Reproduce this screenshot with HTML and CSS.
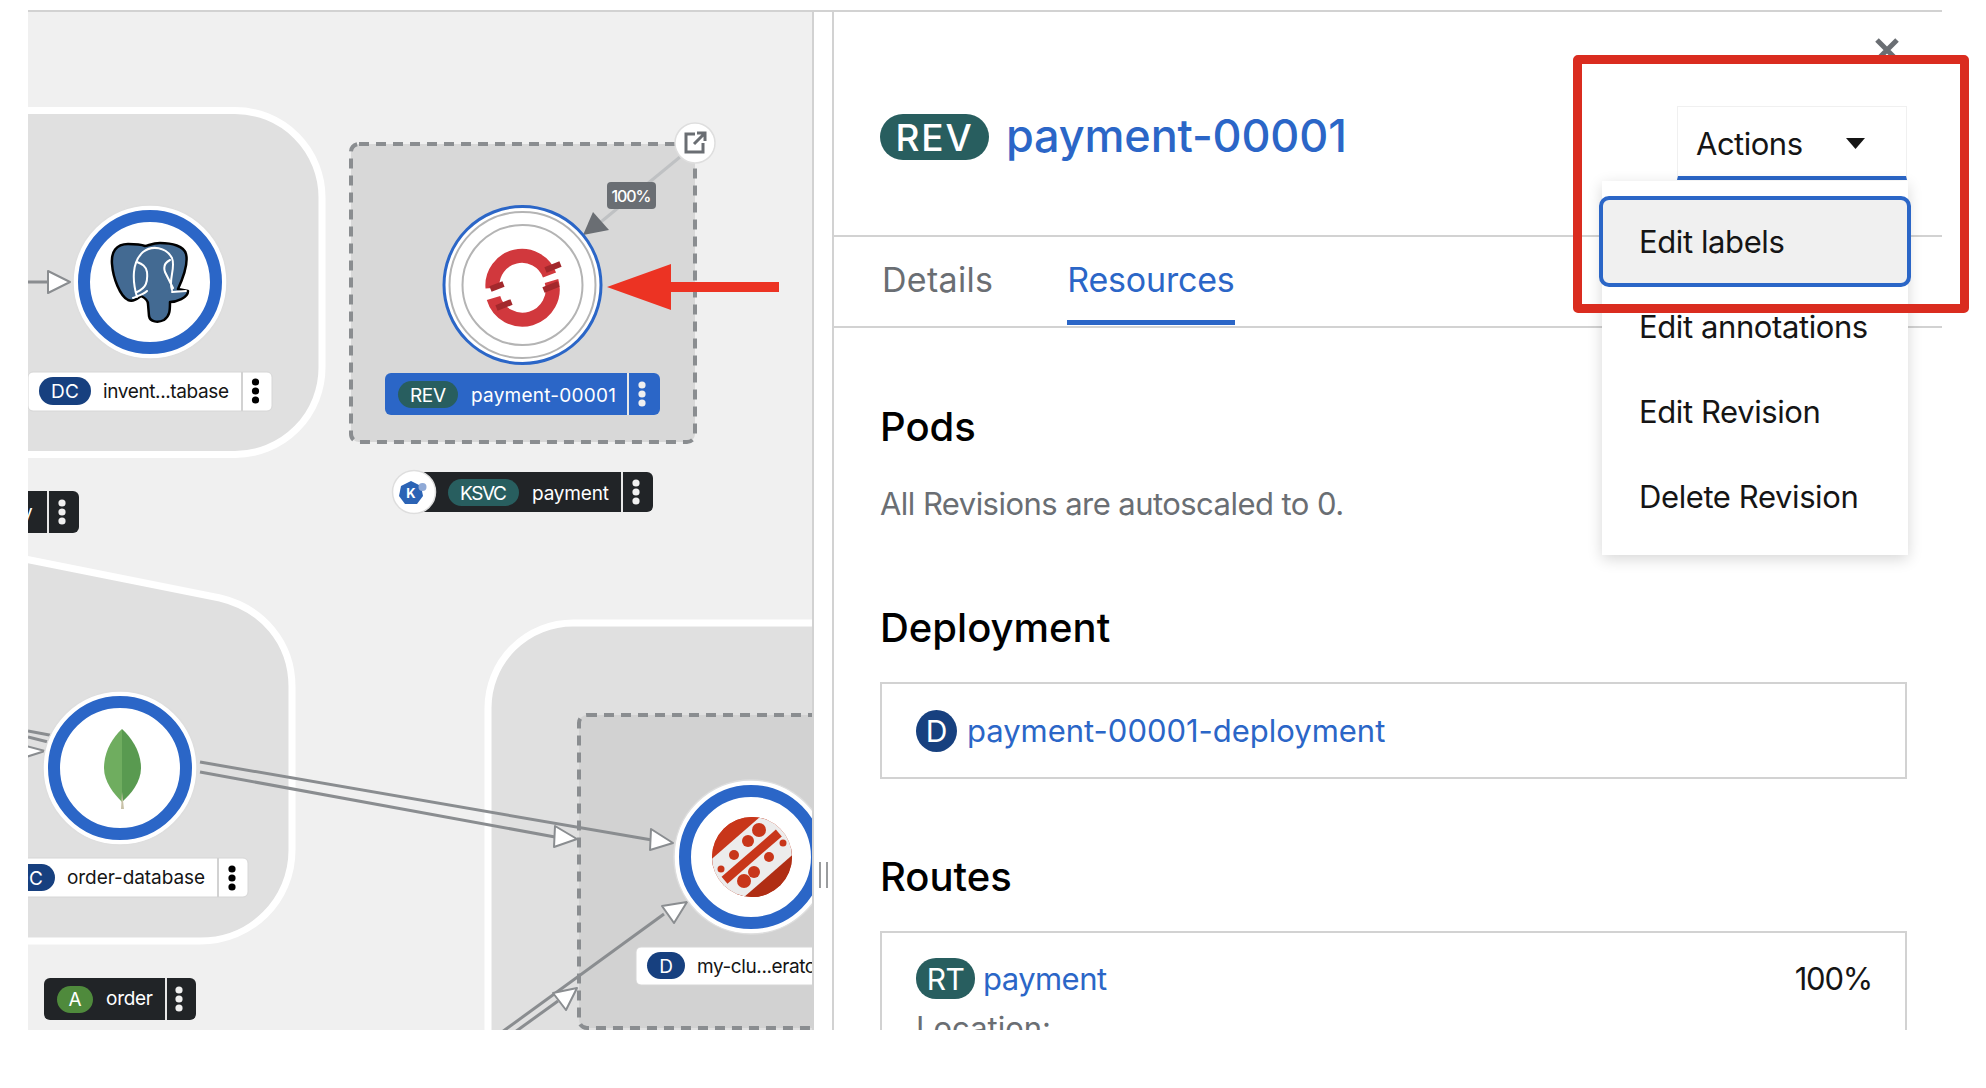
FILE: index.html
```html
<!DOCTYPE html>
<html lang="en">
<head>
<meta charset="utf-8">
<title>payment-00001</title>
<link rel="stylesheet" href="styles.css">
</head>
<body>
<div class="stage">
  <div class="canvas">
    <svg class="topology" viewBox="28 12 784 1018" width="784" height="1018" xmlns="http://www.w3.org/2000/svg">
      <defs>
        <g id="keb"><circle cx="0" cy="-9" r="3.6"/><circle cx="0" cy="0" r="3.6"/><circle cx="0" cy="9" r="3.6"/></g>
        <clipPath id="ballclip"><circle cx="752" cy="857" r="40"/></clipPath>
      </defs>

      <!-- groups -->
      <path class="group" d="M-40 110.500H235A87 87 0 0 1 322 197.500V367A87 87 0 0 1 235 454.500H-40Z"/>
      <path class="group" d="M-40 546L220 598C262 608 292 642 292 687V850C292 900 252 941 200 941H-40Z"/>
      <path class="group" d="M900 623H573A85 85 0 0 0 488 708V1100H900Z"/>

      <rect class="dashed d1" x="351" y="144" width="344" height="298" rx="8"/>
      <rect class="dashed d2" x="579" y="715" width="400" height="313" rx="8"/>

      <!-- edges -->
      <g class="edge">
        <path d="M28 282H48"/>
        <path d="M200 762L652 840"/>
        <path d="M200 772L555 837"/>
        <path d="M28 737L60 745"/>
        <path d="M502 1032L664 914"/>
        <path d="M515 1032L558 1001"/>
      </g>
      <g class="head">
        <path d="M48 271L70 282L48 293Z"/>
        <path d="M555 826L577 839L554 847Z"/>
        <path d="M651 829L673 843L650 850Z"/>
        <path d="M662 906L687 902L674 923Z"/>
        <path d="M553 993L577 988L566 1010Z"/>
        <path d="M22 745L45 751L26 757Z"/>
      </g>

      <!-- postgres node -->
      <circle class="node" cx="150" cy="282" r="77"/>
      <circle class="ring" cx="150" cy="282" r="66"/>
      <path class="pg-body" d="M128 244C116 244 111 252 112 264C113 278 120 296 128 300C133 302 137 299 141 296C145 298 148 300 148 304L149 316C150 322 158 323 164 320C170 316 170 310 170 302C176 302 188 298 188 291L178 289C184 276 188 262 186 254C184 246 172 243 160 243C152 243 148 246 145 246C140 244 134 244 128 244Z"/>
      <path class="pg-line" d="M137 297C132 280 132 262 143 252C152 245 166 247 172 258C176 268 168 280 172 290M137 262C142 264 146 266 147 272C148 282 146 288 137 292M170 260C166 262 163 266 165 272L173 288M133 298C138 296 144 294 147 291M172 292L186 291"/>

      <!-- openshift revision node -->
      <path class="thinline" d="M680 157L596 226"/>
      <path class="gray-head" d="M583 235L593 212L609 230Z"/>
      <circle class="node" cx="522.500" cy="285" r="78.500"/>
      <circle class="rev-ring" cx="522.500" cy="285" r="78.500"/>
      <circle class="rev-inner" cx="522.500" cy="285" r="73"/>
      <circle class="rev-inner" cx="522.500" cy="285" r="60"/>
      <g transform="translate(-1.500 0)">
        <path class="os-arc" d="M494 288A29.500 29.500 0 0 1 551 275"/>
        <path class="os-arc" d="M553 281A30 30 0 0 1 495 298"/>
        <path class="os-stripe" d="M547 270L562 264M545 290L560 284M492 289L505 284M498 308L513 302"/>
      </g>

      <rect class="tip" x="607" y="182" width="49" height="27" rx="4"/>
      <text class="tip-text" x="631.500" y="201.500" text-anchor="middle" textLength="40">100%</text>
      <circle class="node" cx="695" cy="143" r="20"/>
      <path class="ext" d="M695 134H686V152H703V143M694 144L704 134M697 133H705V141"/>

      <!-- red arrow -->
      <path class="red-arrow" d="M607 287L671 264V282H779V292H671V310Z"/>

      <!-- mongodb -->
      <path class="edge-mini" d="M28 731L60 737"/>
      <circle class="node" cx="120" cy="768" r="77"/>
      <circle class="ring" cx="120" cy="768" r="66"/>
      <path class="leaf-l" d="M122 729C112 738 104 752 104 768C104 782 114 794 122 802Z"/>
      <path class="leaf-r" d="M122 729C132 738 141 752 141 768C141 782 131 794 122 802Z"/>
      <path class="stem" d="M122 792L124 809L121 809Z"/>

      <!-- strimzi -->
      <circle class="node" cx="751" cy="857" r="77"/>
      <circle class="ring" cx="751" cy="857" r="66"/>
      <g clip-path="url(#ballclip)">
        <rect class="ball-a" x="700" y="805" width="110" height="54"/>
        <rect class="ball-b" x="700" y="857" width="110" height="54"/>
        <g transform="rotate(-41 752 857)">
          <rect class="ball-a" x="690" y="790" width="130" height="50"/>
          <rect class="ball-b" x="690" y="875" width="130" height="50"/>
          <rect class="ball-w" x="690" y="832" width="130" height="50"/>
          <rect class="ball-band" x="716" y="852" width="72" height="9"/>
        </g>
        <g class="ball-dot">
          <circle cx="759" cy="830" r="7"/><circle cx="748" cy="841" r="6"/><circle cx="734" cy="855" r="5"/><circle cx="721" cy="869" r="3.500"/>
          <circle cx="783" cy="843" r="3.500"/><circle cx="769" cy="857" r="5"/><circle cx="754" cy="872" r="6"/><circle cx="744" cy="881" r="7"/>
        </g>
      </g>

      <!-- labels -->
      <g>
        <rect class="lab-w" x="28" y="372" width="244" height="39" rx="5"/>
        <rect class="pill-dc" x="39" y="377" width="52" height="28" rx="14"/>
        <text class="pill-t" x="65" y="398" text-anchor="middle" textLength="28">DC</text>
        <text class="lab-t" x="103" y="398" textLength="126">invent...tabase</text>
        <path class="div-g" d="M242 372V411"/>
        <use href="#keb" x="255.500" y="391" class="keb-d"/>
      </g>
      <g>
        <rect class="lab-b" x="385" y="373" width="275" height="42" rx="6"/>
        <rect class="pill-rev" x="398" y="381" width="60" height="27" rx="13.500"/>
        <text class="pill-t" x="428" y="402" text-anchor="middle" textLength="36">REV</text>
        <text class="lab-tw" x="471" y="402" textLength="145">payment-00001</text>
        <path class="div-l" d="M628 373V415"/>
        <use href="#keb" x="642" y="394" class="keb-w"/>
      </g>
      <g>
        <rect class="lab-k" x="414" y="472" width="239" height="40" rx="6"/>
        <circle class="node" cx="414" cy="492" r="21.500"/>
        <path class="kn" d="M411 481L421 486L423 496L417 504H405L399 496L401 486Z"/>
        <circle class="kn2" cx="422.500" cy="487" r="4"/>
        <text class="kn-t" x="411" y="498" text-anchor="middle">K</text>
        <rect class="pill-rev" x="448" y="479" width="71" height="27" rx="13.500"/>
        <text class="pill-t" x="483.500" y="500" text-anchor="middle" textLength="47">KSVC</text>
        <text class="lab-tw" x="532" y="500" textLength="77">payment</text>
        <path class="div-l" d="M622 472V512"/>
        <use href="#keb" x="636" y="492" class="keb-w"/>
      </g>
      <g>
        <rect class="lab-k" x="0" y="491" width="79" height="42" rx="6"/>
        <text class="lab-tw" x="22" y="519">y</text>
        <path class="div-l" d="M48 491V533"/>
        <use href="#keb" x="62" y="512" class="keb-w"/>
      </g>
      <g>
        <rect class="lab-w" x="0" y="858" width="248" height="39" rx="5"/>
        <rect class="pill-dc" x="3" y="864" width="52" height="27" rx="13.500"/>
        <text class="pill-t" x="29" y="885" text-anchor="middle" textLength="28">DC</text>
        <text class="lab-t" x="67" y="884" textLength="138">order-database</text>
        <path class="div-g" d="M218 858V897"/>
        <use href="#keb" x="232" y="878" class="keb-d"/>
      </g>
      <g>
        <rect class="lab-k" x="44" y="978" width="152" height="42" rx="6"/>
        <rect class="pill-a" x="57" y="986" width="36" height="27" rx="13.500"/>
        <text class="pill-t" x="75" y="1006" text-anchor="middle">A</text>
        <text class="lab-tw" x="106" y="1005" textLength="47">order</text>
        <path class="div-l" d="M166 978V1020"/>
        <use href="#keb" x="179" y="999" class="keb-w"/>
      </g>
      <g>
        <rect class="lab-w" x="636" y="947" width="240" height="38" rx="5"/>
        <rect class="pill-dc" x="647" y="952" width="38" height="27" rx="13.500"/>
        <text class="pill-t" x="666" y="973" text-anchor="middle">D</text>
        <text class="lab-t" x="697" y="973" textLength="126">my-clu...erator</text>
      </g>
    </svg>
  </div>

  <div class="splitter"><span class="grip"></span></div>

  <section class="panel">
    <div class="panel-clip">
      <header class="panel-head">
        <span class="badge badge-rev">REV</span>
        <h1 class="title">payment-00001</h1>
        <button class="actions" type="button">
          <span>Actions</span>
          <svg class="caret" viewBox="0 0 19 11" width="19" height="11"><path d="M0 0H19L9.500 11Z"/></svg>
        </button>
      </header>
      <nav class="tabs">
        <span class="tab">Details</span>
        <span class="tab tab-on">Resources</span>
      </nav>
      <div class="content">
        <h2 class="h-pods">Pods</h2>
        <p class="muted">All Revisions are autoscaled to 0.</p>
        <h2 class="h-next">Deployment</h2>
        <div class="box box-dep">
          <span class="icon-d">D</span>
          <a class="link">payment-00001-deployment</a>
        </div>
        <h2 class="h-routes">Routes</h2>
        <div class="box box-route">
          <div class="route-row">
            <span class="icon-rt">RT</span>
            <a class="link link-rt">payment</a>
            <span class="pct">100%</span>
          </div>
          <div class="location">Location:</div>
        </div>
      </div>
    </div>

    <svg class="close" viewBox="0 0 26 26" width="26" height="26"><path d="M3 3L23 23M23 3L3 23"/></svg>

    <ul class="menu">
      <li class="item item-focus">Edit labels</li>
      <li class="item">Edit annotations</li>
      <li class="item">Edit Revision</li>
      <li class="item">Delete Revision</li>
    </ul>
    <div class="callout"></div>
  </section>
</div>
</body>
</html>
```
FILE: styles.css
```css
* { box-sizing: border-box; }
html, body { margin: 0; padding: 0; background: #fff; }
body { width: 1986px; height: 1088px; overflow: hidden; font-family: Inter, "Noto Sans", sans-serif; color: #151515; }

.stage {
  display: flex;
  width: 1914px;
  height: 1020px;
  margin: 10px 0 0 28px;
  border-top: 2px solid #d2d2d2;
}

/* topology */
.canvas { width: 786px; height: 1018px; background: #f0f0f0; border-right: 2px solid #d2d2d2; flex: none; }
.topology { display: block; font-family: Inter, "Noto Sans", sans-serif; }
.group { fill: #e0e0e0; stroke: #fff; stroke-width: 7; }
.dashed { stroke: #8a8d90; stroke-width: 4; stroke-dasharray: 10 7; }
.d1 { fill: #d8d8d8; }
.d2 { fill: #d2d2d2; }
.edge { fill: none; stroke: #8a8d90; stroke-width: 3; }
.edge-mini { fill: none; stroke: #8a8d90; stroke-width: 3; }
.head { fill: #fff; stroke: #8a8d90; stroke-width: 2; stroke-linejoin: round; }
.node { fill: #fff; stroke: #dedede; stroke-width: 1.500; }
.ring { fill: #fff; stroke: #2b66c7; stroke-width: 12; }
.rev-ring { fill: #fff; stroke: #2b66c7; stroke-width: 3; }
.rev-inner { fill: none; stroke: #b4b4b4; stroke-width: 2; }
.thinline { stroke: #bfc1c3; stroke-width: 3; fill: none; }
.gray-head { fill: #6a6e73; }
.tip { fill: #6a6e73; }
.tip-text { fill: #fff; font-size: 16px; font-weight: 500; }
.ext { fill: none; stroke: #6a6e73; stroke-width: 3; }
.red-arrow { fill: #ec3323; }

.pg-body { fill: #436a92; stroke: #000; stroke-width: 2.500; stroke-linejoin: round; }
.pg-line { fill: none; stroke: #fff; stroke-width: 2; stroke-linecap: round; }
.os-arc { fill: none; stroke: #d1383d; stroke-width: 14; }
.os-stripe { fill: none; stroke: #a3282c; stroke-width: 6; }
.leaf-l { fill: #6fad5f; }
.leaf-r { fill: #599a50; }
.stem { fill: #c9c2a8; }
.ball-a { fill: #c8361a; }
.ball-b { fill: #b02e14; }
.ball-w { fill: #ececec; }
.ball-band { fill: #c8361a; }
.ball-dot { fill: #c8361a; }

.lab-w { fill: #fff; stroke: #d6d6d6; stroke-width: 1; }
.lab-b { fill: #2b66c7; }
.lab-k { fill: #212427; }
.pill-dc { fill: #17407f; }
.pill-rev { fill: #285e5f; }
.pill-a { fill: #4f8a3c; }
.pill-t { fill: #fff; font-size: 19px; }
.lab-t { fill: #151515; font-size: 19px; }
.lab-tw { fill: #fff; font-size: 19px; }
.div-g { stroke: #d2d2d2; stroke-width: 2; }
.div-l { stroke: #e8e8e8; stroke-width: 2; }
.keb-d { fill: #000; }
.keb-w { fill: #f0f0f0; }
.kn { fill: #2b63b5; }
.kn2 { fill: #8fa9d6; }
.kn-t { fill: #fff; font-size: 13px; font-weight: 700; }

/* splitter */
.splitter { width: 18px; flex: none; display: flex; align-items: center; justify-content: center; padding-left: 1px; height: 1018px; }
.grip { width: 9px; height: 26px; border-left: 2px solid #9a9c9e; border-right: 2px solid #9a9c9e; margin-top: 707px; }

/* panel */
.panel { position: relative; width: 1110px; height: 1018px; flex: none; border-left: 2px solid #d2d2d2; }
.panel-clip { height: 100%; overflow: hidden; }
.panel-head { display: flex; align-items: flex-start; height: 225px; padding: 94px 35px 0 46px; border-bottom: 2px solid #d2d2d2; }
.badge-rev { display: flex; align-items: center; justify-content: center; width: 109px; height: 46px; margin-top: 8px; border-radius: 23px; background: #285e5f; color: #fff; font-size: 37px; font-weight: 500; letter-spacing: 1.8px; }
.title { margin: 3px 0 0 17px; color: #2b66c7; font-size: 45px; line-height: 54px; font-weight: 500; letter-spacing: -.15px; }
.actions { display: flex; align-items: center; justify-content: space-between; width: 230px; height: 74px; margin-left: auto; padding: 3px 41px 0 18px; background: #fff; border: 1px solid #f0f0f0; border-bottom: 4px solid #2b66c7; font: 400 31px Inter, "Noto Sans", sans-serif; letter-spacing: -.5px; color: #151515; }
.caret { fill: #151515; }

.tabs { display: flex; gap: 74px; height: 91px; padding-left: 48px; border-bottom: 2px solid #d2d2d2; }
.tab { height: 88px; border-bottom: 5px solid transparent; font-size: 34px; line-height: 86px; letter-spacing: .3px; color: #6a6e73; }
.tab-on { color: #2b66c7; border-bottom-color: #2b66c7; letter-spacing: -.2px; }

.content { padding: 0 35px 0 46px; }
h2 { margin: 0; font-size: 40px; line-height: 44px; font-weight: 500; color: #000; }
.h-pods { margin-top: 77px; }
.muted { margin: 33px 0 0; font-size: 31px; line-height: 44px; color: #6a6e73; letter-spacing: -.55px; }
.h-next { margin-top: 80px; }
.h-routes { margin-top: 76px; }
.box { margin-top: 32px; border: 2px solid #d2d2d2; }
.box-dep { display: flex; align-items: center; height: 97px; padding-left: 34px; }
.box-route { height: 200px; padding: 25px 33px 0 34px; }
.icon-d { display: flex; align-items: center; justify-content: center; flex: none; width: 41px; height: 42px; border-radius: 50%; background: #17407f; color: #fff; font-size: 30px; }
.link { color: #2b66c7; font-size: 31px; letter-spacing: -.02px; }
.box-dep .link { margin-left: 10px; }
.route-row { display: flex; align-items: center; height: 41px; }
.icon-rt { display: flex; align-items: center; justify-content: center; flex: none; width: 59px; height: 41px; border-radius: 20px; background: #285e5f; color: #fff; font-size: 30px; letter-spacing: -.5px; }
.link-rt { margin-left: 8px; letter-spacing: -.55px; }
.pct { margin-left: auto; font-size: 31px; letter-spacing: -1.2px; }
.location { margin-top: 9px; font-size: 31px; line-height: 40px; color: #6a6e73; }

/* overlays */
.close { position: absolute; left: 1040px; top: 25px; fill: none; stroke: #6a6e73; stroke-width: 5; }
.menu { position: absolute; left: 768px; top: 169px; width: 306px; height: 374px; margin: 0; padding: 18px 0 0; list-style: none; background: #fff; box-shadow: 0 4px 14px rgba(3, 3, 3, .16); }
.item { height: 85px; padding-left: 37px; font-size: 31px; line-height: 85px; letter-spacing: -.4px; color: #151515; }
.item-focus { position: relative; background: #f0f0f0; border-radius: 7px; outline: 4px solid #2b66c7; outline-offset: -1px; }
.callout { position: absolute; left: 739px; top: 43px; width: 396px; height: 258px; border: 9px solid #da2c1f; border-radius: 5px; pointer-events: none; }
```
